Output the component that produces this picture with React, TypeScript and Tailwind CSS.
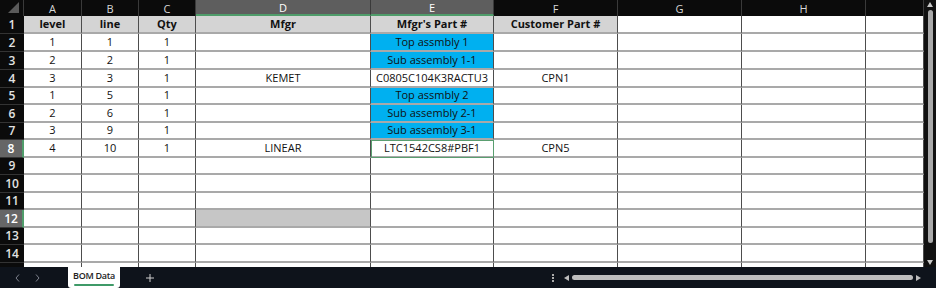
import React from "react";

const COLS = ["A", "B", "C", "D", "E", "F", "G", "H", ""];
const WIDTHS = [58, 57, 57, 175, 123, 124, 124, 124, 58];
const HEIGHTS = [18, 18, 18, 18, 17, 18, 17, 18, 17, 18, 17, 18, 17, 18, 8];

type Row = (string | null)[];

const DATA: Row[] = [
  ["level", "line", "Qty", "Mfgr", "Mfgr's Part #", "Customer Part #"],
  ["1", "1", "1", "", "Top assmbly 1", ""],
  ["2", "2", "1", "", "Sub assembly 1-1", ""],
  ["3", "3", "1", "KEMET", "C0805C104K3RACTU3", "CPN1"],
  ["1", "5", "1", "", "Top assmbly 2", ""],
  ["2", "6", "1", "", "Sub assembly 2-1", ""],
  ["3", "9", "1", "", "Sub assembly 3-1", ""],
  ["4", "10", "1", "LINEAR", "LTC1542CS8#PBF1", "CPN5"],
];

const BLUE_ROWS = [2, 3, 5, 6, 7];

function cellClass(r: number, c: number) {
  if (r === 1 && c < 6) return "bg-[#d4d4d4] font-bold";
  if (c === 4 && BLUE_ROWS.includes(r)) return "bg-[#00b0f0]";
  if (r === 12 && c === 3) return "bg-[#c6c6c6]";
  return "bg-white";
}

function Grid() {
  return (
    <div className="flex-1 overflow-hidden bg-white">
      {/* column header */}
      <div className="flex h-[16px] bg-[#0b0b0b]">
        <div className="relative w-[24px] shrink-0 border-r border-[#3a3a3a]">
          <svg width="14" height="12" className="absolute bottom-[2px] right-[3px]">
            <polygon points="13,0 13,11 2,11" fill="#5a5a5a" />
          </svg>
        </div>
        {COLS.map((c, i) => {
          const sel = i === 3 || i === 4;
          return (
            <div
              key={i}
              style={{ width: WIDTHS[i] }}
              className={`flex shrink-0 items-center justify-center border-r border-[#3a3a3a] text-[11px] leading-none ${
                sel ? "border-b-2 border-b-[#4f9c6a] bg-[#5e5e5e] text-white" : "text-[#d8d8d8]"
              }`}
            >
              {c}
            </div>
          );
        })}
      </div>
      {HEIGHTS.map((h, ri) => {
        const r = ri + 1;
        const row = DATA[ri] || [];
        const selRow = r === 8 || r === 12;
        return (
          <div key={r} className="flex" style={{ height: h }}>
            <div
              className={`flex w-[24px] shrink-0 items-center justify-center border-b border-[#333] text-[12px] font-semibold ${
                selRow ? "border-r-2 border-r-[#4f9c6a] bg-[#666] text-white" : "bg-[#0b0b0b] text-[#e2e2e2]"
              }`}
            >
              {r <= 14 ? r : ""}
            </div>
            {WIDTHS.map((w, c) => {
              const active = r === 8 && c === 4;
              return (
                <div
                  key={c}
                  style={{ width: w }}
                  className={`flex shrink-0 items-center justify-center whitespace-nowrap border-r border-b-2 border-r-[#4d4d4d] border-b-[#a9a9a9] text-[11px] text-[#111] ${cellClass(r, c)} ${
                    active ? "outline outline-1 -outline-offset-1 outline-[#5a9e70]" : ""
                  }`}
                >
                  {c < 6 ? row[c] : ""}
                </div>
              );
            })}
          </div>
        );
      })}
    </div>
  );
}

function VScroll() {
  return (
    <div className="relative flex w-[12px] shrink-0 flex-col items-center bg-[#111] pt-[2px]">
      <svg width="6" height="5" viewBox="0 0 6 5">
        <polygon points="3,0 6,5 0,5" fill="#c8c8c8" />
      </svg>
      <div className="mt-[3px] h-[233px] w-[5px] rounded-full bg-[#a9a9a9]" />
      <div className="flex-1" />
      <svg width="6" height="5" viewBox="0 0 6 5" className="mb-[2px]">
        <polygon points="0,0 6,0 3,5" fill="#c8c8c8" />
      </svg>
    </div>
  );
}

function BottomBar() {
  return (
    <div className="flex h-[21px] items-center bg-[#0e131b] text-[#8a8f99]">
      <svg width="5" height="8" viewBox="0 0 5 8" className="ml-[15px]">
        <polyline points="4,0.5 1,4 4,7.5" fill="none" stroke="#7d828c" strokeWidth="1" />
      </svg>
      <svg width="5" height="8" viewBox="0 0 5 8" className="ml-[15px]">
        <polyline points="1,0.5 4,4 1,7.5" fill="none" stroke="#7d828c" strokeWidth="1" />
      </svg>
      <div className="ml-[28px] flex h-full w-[52px] flex-col items-center self-start rounded-b-[3px] bg-white pt-[4px]">
        <span className="whitespace-nowrap text-[9px] font-semibold leading-none tracking-[-0.3px] text-[#222]">
          BOM Data
        </span>
        <div className="mt-[4px] h-[2px] w-[40px] rounded bg-[#3f9a68]" />
      </div>
      <svg width="8" height="8" viewBox="0 0 8 8" className="ml-[26px]">
        <path d="M4 0v8M0 4h8" stroke="#cfcfcf" strokeWidth="1" />
      </svg>
      <div className="ml-[398px] flex flex-col gap-[1px]">
        <div className="h-[2px] w-[2px] bg-[#aaa]" />
        <div className="h-[2px] w-[2px] bg-[#aaa]" />
        <div className="h-[2px] w-[2px] bg-[#aaa]" />
      </div>
      <svg width="5" height="6" viewBox="0 0 5 6" className="ml-[10px]">
        <polygon points="5,0 5,6 0,3" fill="#bdbdbd" />
      </svg>
      <div className="ml-[3px] h-[5px] w-[341px] rounded-full bg-[#bdbdbd]" />
      <svg width="5" height="6" viewBox="0 0 5 6" className="ml-[3px]">
        <polygon points="0,0 0,6 5,3" fill="#bdbdbd" />
      </svg>
    </div>
  );
}

export default function App() {
  return (
    <div
      className="flex h-[288px] w-[936px] flex-col overflow-hidden bg-[#0e131b]"
      style={{ fontFamily: '"Open Sans", "Noto Sans", sans-serif' }}
    >
      <div className="flex h-[267px] overflow-hidden">
        <Grid />
        <VScroll />
      </div>
      <BottomBar />
    </div>
  );
}
